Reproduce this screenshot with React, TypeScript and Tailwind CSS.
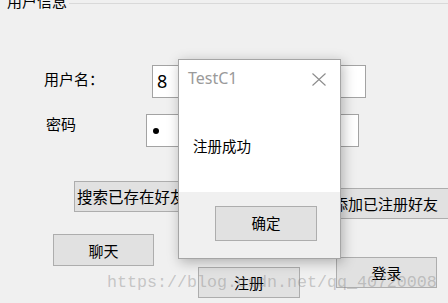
const cjk = "font-['Noto_Sans_CJK_SC','Noto_Sans',sans-serif]";
const btn = 'border border-[#adadad] bg-[#e1e1e1] text-black';

// ── Message box ───────────────────────────────────────────────────────────────

function CloseGlyph() {
  return (
    <svg width="14" height="13" viewBox="0 0 14 13" className="mt-[6px]" aria-label="Close">
      <path d="M0.5 0.5 L13.5 12.5 M13.5 0.5 L0.5 12.5" stroke="#8c8c8c" strokeWidth="1.1" fill="none" />
    </svg>
  );
}

function MessageBox() {
  return (
    <div className="absolute left-[178px] top-[59px] flex h-[200px] w-[163px] flex-col border border-[#a5a5a5] bg-white shadow-[2px_3px_12px_rgba(0,0,0,0.28)]">
      <div className="flex items-start justify-between pl-[9px] pr-[14px] pt-[7px]">
        <span className="font-['Noto_Sans',sans-serif] text-[16px] leading-[22px] text-[#9a9a9a]">TestC1</span>
        <CloseGlyph />
      </div>
      <p className={`${cjk} mt-[50px] pl-[14px] text-[14.5px] leading-none text-black`}>注册成功</p>
      <div className="mt-auto h-[66px] bg-[#f0f0f0] pl-[36px] pt-[14px]">
        <button className={`${btn} ${cjk} h-[35px] w-[102px] text-[14.5px] leading-none`}>确定</button>
      </div>
    </div>
  );
}

export default function App() {
  return (
    <div className={`${cjk} relative h-[303px] w-[448px] overflow-hidden bg-[#f0f0f0] text-black`}>
      {/* Group box header */}
      <div className="flex h-[8px] items-start">
        <span className="-mt-[7px] pl-[7px] text-[15px] leading-none whitespace-nowrap">用户信息</span>
        <div className="ml-[2px] mt-[3px] h-px flex-1 bg-[#d9d9d9]" />
      </div>

      {/* User name */}
      <div className="mt-[57px] flex items-start pl-[44px]">
        <span className="mt-[6px] w-[108px] text-[15px] leading-none">用户名：</span>
        <div className="h-[33px] w-[214px] border border-[#a3a3a3] bg-white pl-[4px] font-['Noto_Sans',sans-serif] text-[18px] leading-[31px]">
          8
        </div>
      </div>

      {/* Password */}
      <div className="mt-[16px] flex items-start pl-[46px]">
        <span className="mt-[2px] w-[100px] text-[15px] leading-none">密码</span>
        <div className="flex h-[33px] w-[213px] items-center border border-[#a3a3a3] bg-white pl-[6px]">
          <span className="h-[6px] w-[6px] rounded-full bg-black" />
        </div>
      </div>

      {/* Friend buttons */}
      <div className="mt-[34px] flex items-start pl-[74px]">
        <button className={`${btn} h-[31px] w-[106px] pl-[2px] text-left text-[15.5px] leading-none whitespace-nowrap`}>
          搜索已存在好友
        </button>
        <button className={`${btn} ml-[144px] mt-[7px] h-[31px] w-[140px] shrink-0 pl-[8px] text-left text-[15px] leading-none whitespace-nowrap`}>
          添加已注册好友
        </button>
      </div>

      {/* Action buttons */}
      <div className="mt-[15px] flex items-start pl-[53px]">
        <button className={`${btn} h-[32px] w-[101px] text-[15px] leading-none`}>聊天</button>
        <button className={`${btn} ml-[44px] mt-[33px] h-[31px] w-[102px] text-[15px] leading-none`}>注册</button>
        <button className={`${btn} ml-[36px] mt-[23px] h-[31px] w-[101px] text-[15px] leading-none`}>登录</button>
      </div>

      <MessageBox />

      {/* Watermark */}
      <span className="pointer-events-none absolute left-[107px] top-[275px] font-['Liberation_Mono',monospace] text-[16.67px] leading-none whitespace-nowrap text-[rgba(130,130,130,0.4)]">
        https://blog.csdn.net/qq_40720008
      </span>
    </div>
  );
}
